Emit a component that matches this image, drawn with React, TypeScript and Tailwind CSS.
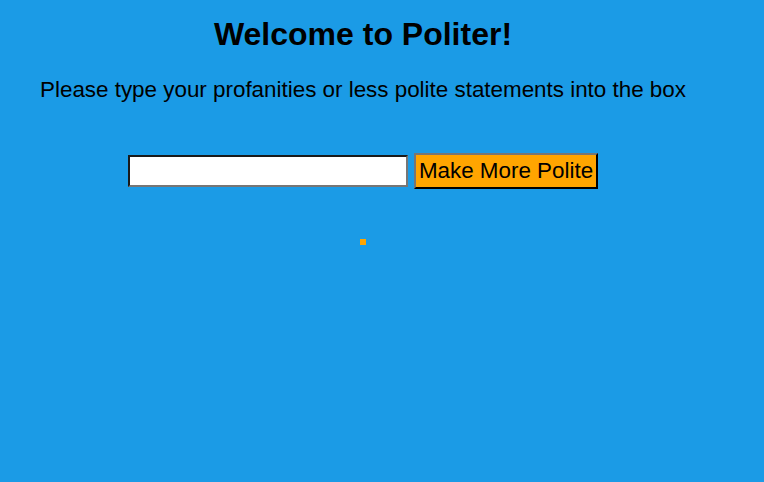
export default function App() {
  return (
    <div className="min-h-[482px] w-full bg-[#1b9be6] font-['Liberation_Sans',Arial,sans-serif] text-black">
      <div className="w-[726px] text-center">
        <h1 className="pt-[16px] text-[32px] font-bold leading-[36px]">Welcome to Politer!</h1>
        <p className="mt-[25px] text-[22.4px] leading-[26px]">
          Please type your profanities or less polite statements into the box
        </p>
        <div className="mt-[50px] flex items-center justify-center gap-[6px]">
          <input
            type="text"
            className="h-[32px] w-[280px] border-2 border-t-[#1a1a1a] border-l-[#1a1a1a] border-b-[#767676] border-r-[#767676] bg-white px-1 text-[20px] outline-none"
          />
          <button className="h-[36px] w-[184px] border-2 border-t-[#767676] border-l-[#767676] border-b-black border-r-black bg-[#ffa500] text-[22.4px] leading-none">
            Make More Polite
          </button>
        </div>
        <div className="mt-[50px] flex justify-center">
          <div className="h-[6px] w-[6px] bg-[#ffa500]" />
        </div>
      </div>
    </div>
  );
}
